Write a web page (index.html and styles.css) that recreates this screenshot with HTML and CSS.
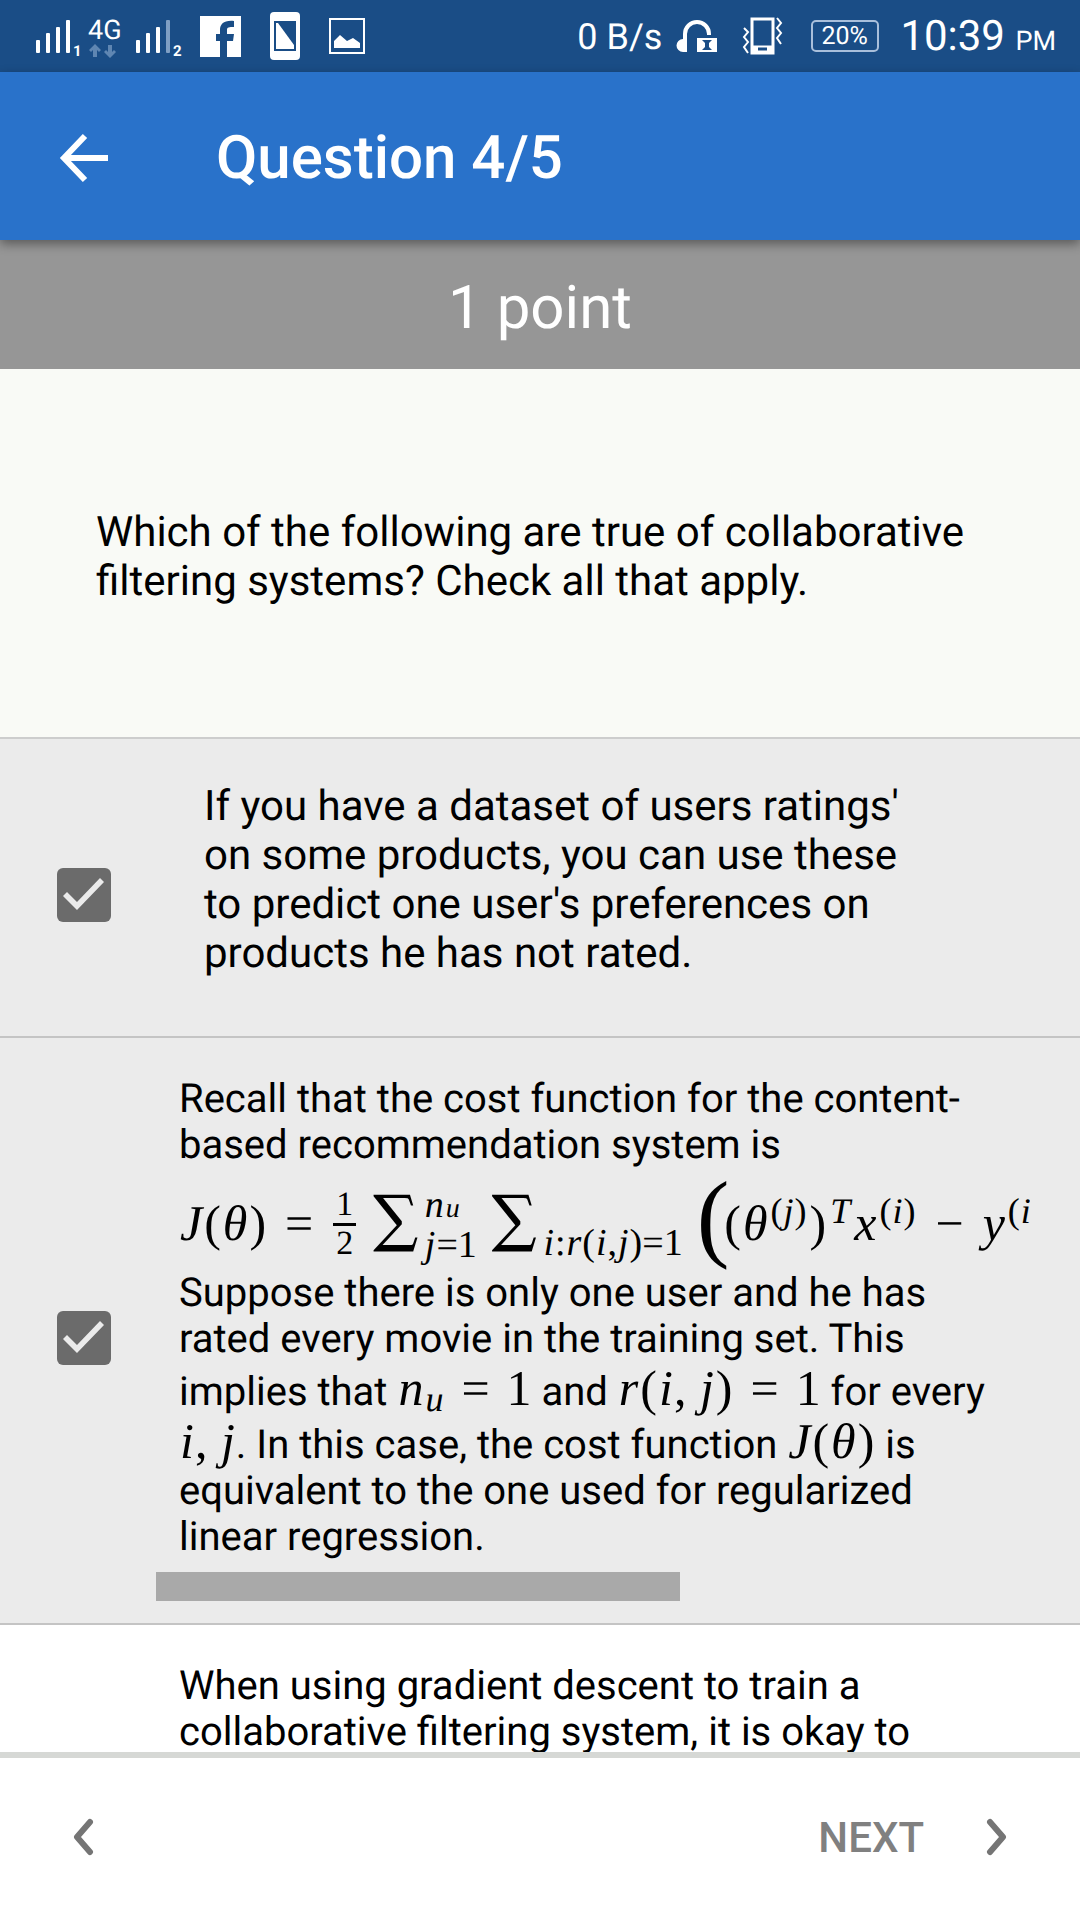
FILE: index.html
```html
<!DOCTYPE html>
<html lang="en">
<head>
<meta charset="utf-8">
<meta name="viewport" content="width=device-width, initial-scale=1">
<title>Question 4/5</title>
<link rel="stylesheet" href="styles.css">
</head>
<body>
<div class="status">
  <div class="status-side status-left">
    <svg class="signal" width="48" height="48" viewBox="0 -4 48 48" fill="#fff">
      <rect x="0" y="24" width="4" height="13" rx="1"/><rect x="10" y="17" width="4" height="20" rx="1"/><rect x="20" y="11" width="4" height="26" rx="1"/><rect x="30" y="4" width="4" height="33" rx="1"/>
      <text class="sim" x="37" y="40">1</text>
    </svg>
    <div class="network">
      <span>4G</span>
      <svg width="30" height="16" viewBox="0 0 30 16" fill="#5f86b2"><path d="M7 1l6 6-2 2-2-2v7H5V7L3 9 1 7zM22 15l-6-6 2-2 2 2V2h4v7l2-2 2 2z"/></svg>
    </div>
    <svg class="signal" width="48" height="48" viewBox="0 -4 48 48" fill="#fff">
      <rect x="0" y="24" width="4" height="13" rx="1"/><rect x="10" y="17" width="4" height="20" rx="1"/><rect x="20" y="11" width="4" height="26" rx="1"/><rect x="30" y="4" width="4" height="33" rx="1" fill="#7f9fc4"/>
      <text class="sim" x="37" y="40">2</text>
    </svg>
    <svg class="app" width="41" height="41" viewBox="0 0 41 41"><path fill="#fff" fill-rule="evenodd" d="M0 0H41V41H27V25H33L34 18H27V14C27 11 29 11 34 11V5C24 4 20 8 20 14V18H16V25H20V41H0z"/></svg>
    <svg class="app" width="30" height="48" viewBox="0 0 30 48"><rect width="30" height="48" rx="4" fill="#fff"/><path fill="#1a4d86" d="M4 9H26V39H4z"/><path fill="#fff" d="M6 11H8L24 33V37H6z"/></svg>
    <svg class="app" width="36" height="36" viewBox="0 0 36 36"><path fill="none" stroke="#fff" stroke-width="2" d="M1 1H35V35H1z"/><path fill="#fff" d="M5 30V23L11 17L18 23L24 20L31 25V30z"/></svg>
  </div>
  <div class="status-side">
    <span class="speed">0 B/s</span>
    <svg width="42" height="34" viewBox="0 0 42 34"><path fill="none" stroke="#fff" stroke-width="4" d="M9 22V15A12 12 0 0 1 33 15V16"/><path fill="#fff" d="M11 19V33H7A6 6 0 0 1 7 20z"/><path fill="none" stroke="#fff" stroke-width="2" d="M22 20H40V32H22z"/><path fill="#fff" d="M22 20H25L29 24V28L25 32H22zM40 20H37L33 24V28L37 32H40z"/></svg>
    <svg width="42" height="38" viewBox="0 0 42 38" fill="none" stroke="#fff"><path stroke-width="3" d="M10 2H31V36H10z"/><path fill="#fff" d="M10 29H31V36H10z"/><path stroke="#1a4d86" stroke-width="3" d="M16 32H25"/><path stroke-width="2" d="M2 11L6 15L2 20L6 25L2 30L6 36M35 1L39 6L35 11L39 16L35 21L39 27"/></svg>
    <span class="battery">20%</span>
    <span class="clock">10:39 <small>PM</small></span>
  </div>
</div>

<header class="bar">
  <button class="back" type="button" aria-label="Back"><svg width="50" height="50" viewBox="0 0 50 50" fill="none" stroke="#fff" stroke-width="6"><path d="M26 3L5 25L26 47M4 25H49"/></svg></button>
  <h1>Question 4/5</h1>
</header>

<main>
  <p class="points">1 point</p>
  <p class="question">Which of the following are true of collaborative filtering systems? Check all that apply.</p>

  <div class="option checked">
    <div class="tick"><input type="checkbox" id="option-1" checked></div>
    <label class="plain" for="option-1">If you have a dataset of users ratings' on some products, you can use these to predict one user's preferences on products he has not rated.</label>
  </div>

  <div class="option checked">
    <div class="tick"><input type="checkbox" id="option-2" checked></div>
    <div class="scroller">
      <label class="rich" for="option-2">Recall that the cost function for the content-<br>based recommendation system is
        <span class="formula"><i>J</i><b>(</b><i>θ</i><b>)</b><span class="rel">=</span><span class="frac"><span>1</span><span>2</span></span><span class="sum">∑</span><span class="limits"><span><i>n</i><i class="subsub">u</i></span><span><i>j</i>=1</span></span><span class="sum">∑</span><span class="limits"><span></span><span><i>i</i>:<i>r</i>(<i>i</i>,<i>j</i>)=1</span></span><span class="tall">(</span><b>(</b><i>θ</i><span class="sup">(<i>j</i>)</span><b>)</b><span class="sup"><i>T</i></span><i>x</i><span class="sup">(<i>i</i>)</span><span class="rel">−</span><i>y</i><span class="sup">(<i>i</i></span></span>
        Suppose there is only one user and he has<br>rated every movie in the training set. This<br>implies that <span class="math"><i>n</i><i class="sub">u</i><span class="eq">=</span>1</span> and <span class="math"><i>r</i><b>(</b><i>i</i>, <i>j</i><b>)</b><span class="eq">=</span>1</span> for every<br><span class="math"><i>i</i>, <i>j</i></span>. In this case, the cost function <span class="math"><i>J</i><b>(</b><i>θ</i><b>)</b></span> is<br>equivalent to the one used for regularized<br>linear regression.</label>
      <div class="thumb"></div>
    </div>
  </div>

  <div class="option">
    <div class="tick"></div>
    <div class="scroller">
      <p class="rich">When using gradient descent to train a<br>collaborative filtering system, it is okay to</p>
    </div>
  </div>
</main>

<footer class="nav">
  <button type="button" aria-label="Previous"><svg width="22" height="38" viewBox="0 0 22 38"><path d="M18 4L5 19L18 34"/></svg></button>
  <button type="button">NEXT <svg width="22" height="38" viewBox="0 0 22 38"><path d="M4 4L17 19L4 34"/></svg></button>
</footer>
</body>
</html>
```

FILE: styles.css
```css
* { box-sizing: border-box; }

body {
  margin: 0;
  height: 100vh;
  display: flex;
  flex-direction: column;
  overflow: hidden;
  background: #fff;
  color: #000;
  font-family: Roboto, sans-serif;
  font-size: 42px;
  line-height: 49px;
  text-rendering: geometricPrecision;
}

h1, p { margin: 0; }
button { padding: 0; border: 0; background: none; font: inherit; color: inherit; }
svg { display: block; flex: none; }

/* Status bar */
.status {
  flex: none;
  display: flex;
  justify-content: space-between;
  height: 72px;
  padding: 0 24px 0 36px;
  background: #1a4d86;
  color: #fff;
}
.status-side { display: flex; align-items: center; gap: 24px; }
.status-left { gap: 4px; }
.sim { font: 700 15px Roboto, sans-serif; }
.network { width: 44px; padding-top: 4px; font-size: 27px; line-height: 26px; }
.app { margin: 0 13px 0 12px; }
.speed { padding-top: 3px; font-size: 36px; margin-right: -10px; }
.battery {
  width: 68px;
  height: 32px;
  margin: 0 -3px 0 3px;
  padding-left: 8px;
  border: 2px solid #a9bfdb;
  border-radius: 5px;
  font-size: 25px;
  line-height: 30px;
}
.clock { padding-top: 6px; font-size: 42px; }
.clock small { font-size: 27px; }

/* App bar */
.bar {
  flex: none;
  position: relative;
  display: flex;
  align-items: center;
  gap: 107px;
  height: 168px;
  padding: 3px 59px 0;
  background: #2972ca;
  color: #fff;
  box-shadow: 0 4px 10px rgba(0, 0, 0, .4);
}
h1 { font-size: 60px; line-height: 70px; font-weight: 500; }

/* Question */
main { flex: 1; min-height: 0; overflow: hidden; }
.points {
  padding: 33px 0 26px;
  background: #969696;
  color: #fff;
  font-size: 60px;
  line-height: 70px;
  text-align: center;
}
.question {
  padding: 139px 96px 131px;
  border-bottom: 2px solid #cdcdcd;
  background: #f9faf6;
}

/* Answer options */
.option { display: flex; border-bottom: 2px solid #c4c4c4; }
.checked { background: #ebebeb; }
.tick { flex: none; display: flex; align-items: center; width: 156px; padding: 15px 0 0 57px; }
.tick input {
  appearance: none;
  width: 54px;
  height: 54px;
  margin: 0;
  border-radius: 6px;
  background: #6b6b6b;
}
.tick input::before {
  content: "";
  display: block;
  height: 54px;
  background: #ebebeb;
  clip-path: polygon(6px 28px, 10px 24px, 20px 34px, 43px 10px, 47px 14px, 20px 42px);
}
.plain { padding: 43px 160px 58px 48px; }
.scroller { flex: 1; min-width: 0; margin-right: 50px; overflow: hidden; }
.rich {
  display: block;
  padding: 38px 0 12px 23px;
  font-size: 40px;
  line-height: 46px;
  white-space: nowrap;
}
.thumb { width: 60%; height: 29px; margin-bottom: 22px; background: #a9a9a9; }

/* Mathematics */
.formula, .math { font-family: "Liberation Serif", serif; font-size: 50px; }
.formula i, .math i { font-style: italic; padding: 0 1px; }
.formula b, .math b { font-weight: 400; padding: 0 1px; }
.math { line-height: 53px; }
.eq { padding: 0 17px; }
.math .sub { font-size: 36px; line-height: 0; vertical-align: -6px; }
.subsub { font-size: 28px; }
.formula { display: flex; align-items: center; height: 102px; padding-top: 8px; line-height: 50px; }
.rel { padding: 0 18px; }
.frac { display: flex; flex-direction: column; font-size: 34px; line-height: 36px; padding: 3px 2px 0; }
.frac span + span { border-top: 3px solid #000; }
.frac span { padding: 0 3px; }
.sum { font-family: "DejaVu Math TeX Gyre", "DejaVu Serif", serif; font-size: 54px; padding-left: 11px; }
.limits { display: flex; flex-direction: column; font-size: 38px; line-height: 36px; padding: 3px 0 0 2px; }
.limits span:empty { height: 36px; }
.tall { font-size: 98px; padding: 0 0 12px 14px; margin-right: -6px; }
.sup { font-size: 36px; line-height: 36px; padding: 0 2px 24px; }

/* Bottom navigation */
.nav {
  flex: none;
  display: flex;
  justify-content: space-between;
  align-items: center;
  height: 168px;
  padding: 0 72px 4px;
  border-top: 6px solid #d6d8d5;
  background: #fff;
  color: #808080;
  font-weight: 500;
}
.nav button { display: flex; align-items: center; gap: 62px; }
.nav path { fill: none; stroke: #757575; stroke-width: 6; stroke-linecap: round; stroke-linejoin: round; }
```
